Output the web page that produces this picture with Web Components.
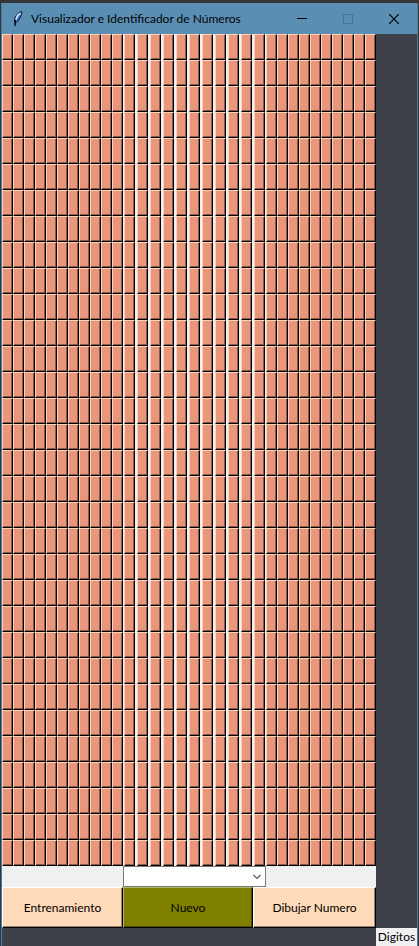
<!DOCTYPE html>
<html lang="es">
<head>
<meta charset="utf-8">
<title>Visualizador e Identificador de Números</title>
<style>
  body {
    margin: 0;
    min-height: 100vh;
    background: #343638;
    color: #000;
    font: 12px/16px Lato, "Open Sans", sans-serif;
  }
</style>
</head>
<body>
<app-window></app-window>

<script>
class TitleBar extends HTMLElement {
  constructor() {
    super();
    this.attachShadow({ mode: 'open' }).innerHTML = `
      <style>
        :host { display: flex; align-items: center; height: 31px; background: #5a8fb3; }
        .logo { flex: none; margin: 0 7px 0 10px; }
        h1 { flex: 1; margin: 0; font: inherit; white-space: nowrap; }
        button { flex: none; width: 46px; height: 31px; padding: 0; border: 0; background: none; color: #000; display: grid; place-items: center; }
        button:disabled { color: #4a7593; }
        svg { display: block; }
      </style>
      <svg class="logo" width="12" height="18" viewBox="0 0 12 18" aria-hidden="true">
        <path d="M9.500 1.500 C6 2.500 3 6 2.500 10 L3 13 L6 11 L8.500 7 L10 3 Z" fill="#5d9be6" stroke="#0b1222"/>
        <path d="M8.500 3 L5.500 5.500 L4 9.500" fill="none" stroke="#d8edff" stroke-width="1.500"/>
        <path d="M8.500 5 L5 10" fill="none" stroke="#2a62b5"/>
        <path d="M3.500 10 L3 16" fill="none" stroke="#000" stroke-width="1.300"/>
      </svg>
      <h1><slot></slot></h1>
      <button aria-label="Minimizar"><svg width="10" height="11"><path d="M0 5.500H10" stroke="currentColor"/></svg></button>
      <button aria-label="Maximizar" disabled><svg width="10" height="10"><rect x=".5" y=".5" width="9" height="9" fill="none" stroke="currentColor"/></svg></button>
      <button aria-label="Cerrar"><svg width="10" height="10"><path d="M0 0L10 10M10 0L0 10" stroke="currentColor" stroke-width="1.200"/></svg></button>`;
  }
}
customElements.define('title-bar', TitleBar);

class PixelBoard extends HTMLElement {
  constructor() {
    super();
    const root = this.attachShadow({ mode: 'open' });
    root.innerHTML = `
      <style>
        :host {
          display: grid;
          grid-template-columns: repeat(11, 11fr) repeat(11, 13fr) repeat(10, 11fr);
          grid-auto-rows: 26px;
          background: #f0f0f0;
        }
        button {
          min-width: 0; margin: 0; padding: 0; border-radius: 0;
          border: 1px solid; border-color: #ffd2bd #000 #000 #ffd2bd;
          background: #e9967a;
          box-shadow: inset -1px -1px #8c5a49;
        }
        .wide { margin: 0 1px; }
      </style>`;
    const cells = document.createDocumentFragment();
    for (let row = 0; row < 32; row++) {
      for (let col = 0; col < 32; col++) {
        const cell = document.createElement('button');
        cell.setAttribute('aria-label', `Fila ${row + 1}, columna ${col + 1}`);
        if (col > 10 && col < 22) cell.className = 'wide';
        cells.append(cell);
      }
    }
    root.append(cells);
  }
}
customElements.define('pixel-board', PixelBoard);

class DigitSelect extends HTMLElement {
  constructor() {
    super();
    this.attachShadow({ mode: 'open' }).innerHTML = `
      <style>
        :host { display: grid; }
        select, svg { grid-area: 1 / 1; }
        select { appearance: none; width: 100%; height: 21px; margin: 0; padding: 0 20px 0 4px; border: 1px solid #7a7a7a; border-radius: 0; background: #fff; color: #000; font: inherit; }
        svg { place-self: center end; margin-right: 5px; pointer-events: none; }
      </style>
      <select aria-label="Digitos"><option></option></select>
      <svg width="8" height="6" viewBox="0 0 8 6"><path d="M.5 1L4 4.500L7.500 1" fill="none" stroke="#555" stroke-width="1.200"/></svg>`;
  }
}
customElements.define('digit-select', DigitSelect);

class RaisedButton extends HTMLElement {
  constructor() {
    super();
    this.attachShadow({ mode: 'open' }).innerHTML = `
      <style>
        :host { display: block; --face: #ffdab9; --light: #fff; --shade: #99836f; }
        :host([tone="olive"]) { --face: #808000; --light: #b3b36b; --shade: #4d4d00; }
        button {
          display: block; width: 100%; height: 41px; margin: 0; padding: 0;
          border: 1px solid; border-color: var(--light) #000 #000 var(--light); border-radius: 0;
          background: var(--face); box-shadow: inset -1px -1px var(--shade);
          color: #000; font: inherit; white-space: nowrap;
        }
      </style>
      <button><slot></slot></button>`;
  }
}
customElements.define('raised-button', RaisedButton);

class ControlPanel extends HTMLElement {
  constructor() {
    super();
    this.attachShadow({ mode: 'open' }).innerHTML = `
      <style>
        :host { display: grid; grid-template-columns: 121fr 130fr 13fr 110fr; background: #f0f0f0; }
        digit-select { grid-column: 2 / 4; }
        .train { grid-column: 1; }
        .draw { grid-column: 3 / 5; }
      </style>
      <digit-select></digit-select>
      <raised-button class="train">Entrenamiento</raised-button>
      <raised-button tone="olive">Nuevo</raised-button>
      <raised-button class="draw">Dibujar Numero</raised-button>`;
  }
}
customElements.define('control-panel', ControlPanel);

class AppWindow extends HTMLElement {
  constructor() {
    super();
    this.attachShadow({ mode: 'open' }).innerHTML = `
      <style>
        :host { display: block; padding: 3px 1px 0; }
        .frame { border: solid #467fa5; border-width: 0 1px; background: #3f414a; }
        .content { display: grid; grid-template-columns: 374fr 41fr; }
        .status { grid-area: 2 / 2; padding: 1px 0; background: #f0f0f0; text-align: center; white-space: nowrap; }
      </style>
      <div class="frame">
        <title-bar>Visualizador e Identificador de Números</title-bar>
        <main class="content">
          <div>
            <pixel-board></pixel-board>
            <control-panel></control-panel>
          </div>
          <div class="status">Digitos</div>
        </main>
      </div>`;
  }
}
customElements.define('app-window', AppWindow);
</script>
</body>
</html>
